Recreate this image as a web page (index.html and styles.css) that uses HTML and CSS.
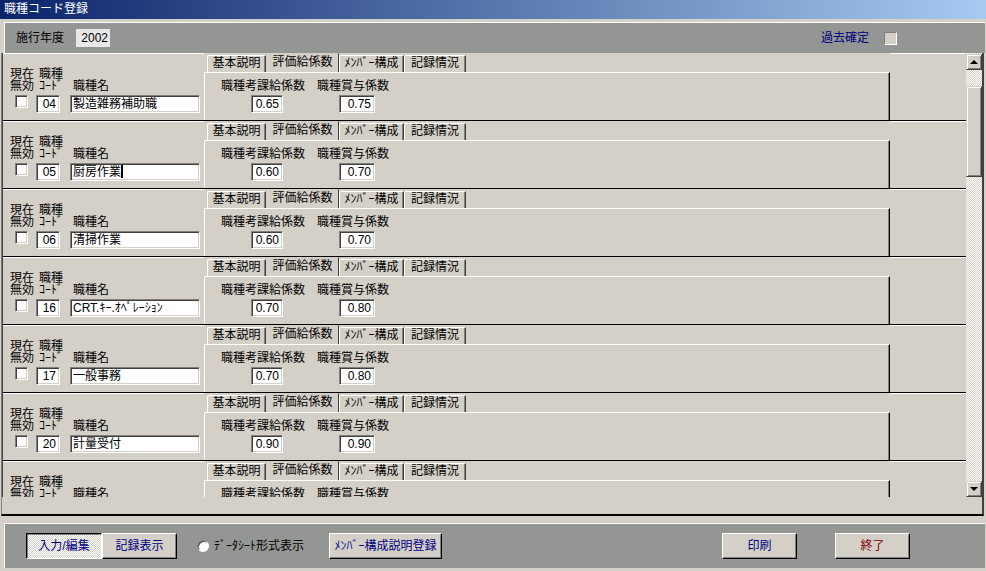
FILE: index.html
```
<!DOCTYPE html>
<html lang='ja'>
<head>
    <meta charset='UTF-8'>
    <title>職種コード登録</title>
    <link rel="stylesheet" href="styles.css">
</head>
<body>
    <div class='titlebar'>職種コード登録</div>

    <div class='header'>
        <span>施行年度</span>
        <span class='year'>2002</span>
        <span class='past'>過去確定</span>
        <span class='flatcheck'></span>
    </div>

    <div class='detail-wrap'>
        <div class='detail'>
            <div class='records'>

                <div class='rec'>
                    <div class='rec-left'>
                        <div class='col1'><div class='lbl'>現在<br>無効</div><span class='chk'></span></div>
                        <div class='col2'><div class='lbl'>職種<br>ｺｰﾄﾞ</div><span class='box code'>04</span></div>
                        <div class='col3'><div class='lbl one'>職種名</div><span class='box name'>製造雑務補助職</span></div>
                    </div>
                    <div class='rec-tabs'>
                        <div class='tabrow'>
                            <span class='tab t1'>基本説明</span><span class='tab t2 sel'>評価給係数</span><span class='tab t3'>ﾒﾝﾊﾞｰ構成</span><span class='tab t4'>記録情況</span>
                        </div>
                        <div class='page'>
                            <div class='pcol a'><div class='lbl'>職種考課給係数</div><span class='box num'>0.65</span></div>
                            <div class='pcol b'><div class='lbl'>職種賞与係数</div><span class='box num'>0.75</span></div>
                        </div>
                    </div>
                    <div class='rec-blank'></div>
                </div>

                <div class='rec'>
                    <div class='rec-left'>
                        <div class='col1'><div class='lbl'>現在<br>無効</div><span class='chk'></span></div>
                        <div class='col2'><div class='lbl'>職種<br>ｺｰﾄﾞ</div><span class='box code'>05</span></div>
                        <div class='col3'><div class='lbl one'>職種名</div><span class='box name'>厨房作業<i class='caret'></i></span></div>
                    </div>
                    <div class='rec-tabs'>
                        <div class='tabrow'>
                            <span class='tab t1'>基本説明</span><span class='tab t2 sel'>評価給係数</span><span class='tab t3'>ﾒﾝﾊﾞｰ構成</span><span class='tab t4'>記録情況</span>
                        </div>
                        <div class='page'>
                            <div class='pcol a'><div class='lbl'>職種考課給係数</div><span class='box num'>0.60</span></div>
                            <div class='pcol b'><div class='lbl'>職種賞与係数</div><span class='box num'>0.70</span></div>
                        </div>
                    </div>
                    <div class='rec-blank'></div>
                </div>

                <div class='rec'>
                    <div class='rec-left'>
                        <div class='col1'><div class='lbl'>現在<br>無効</div><span class='chk'></span></div>
                        <div class='col2'><div class='lbl'>職種<br>ｺｰﾄﾞ</div><span class='box code'>06</span></div>
                        <div class='col3'><div class='lbl one'>職種名</div><span class='box name'>清掃作業</span></div>
                    </div>
                    <div class='rec-tabs'>
                        <div class='tabrow'>
                            <span class='tab t1'>基本説明</span><span class='tab t2 sel'>評価給係数</span><span class='tab t3'>ﾒﾝﾊﾞｰ構成</span><span class='tab t4'>記録情況</span>
                        </div>
                        <div class='page'>
                            <div class='pcol a'><div class='lbl'>職種考課給係数</div><span class='box num'>0.60</span></div>
                            <div class='pcol b'><div class='lbl'>職種賞与係数</div><span class='box num'>0.70</span></div>
                        </div>
                    </div>
                    <div class='rec-blank'></div>
                </div>

                <div class='rec'>
                    <div class='rec-left'>
                        <div class='col1'><div class='lbl'>現在<br>無効</div><span class='chk'></span></div>
                        <div class='col2'><div class='lbl'>職種<br>ｺｰﾄﾞ</div><span class='box code'>16</span></div>
                        <div class='col3'><div class='lbl one'>職種名</div><span class='box name'>CRT.ｷｰ.ｵﾍﾟﾚｰｼｮﾝ</span></div>
                    </div>
                    <div class='rec-tabs'>
                        <div class='tabrow'>
                            <span class='tab t1'>基本説明</span><span class='tab t2 sel'>評価給係数</span><span class='tab t3'>ﾒﾝﾊﾞｰ構成</span><span class='tab t4'>記録情況</span>
                        </div>
                        <div class='page'>
                            <div class='pcol a'><div class='lbl'>職種考課給係数</div><span class='box num'>0.70</span></div>
                            <div class='pcol b'><div class='lbl'>職種賞与係数</div><span class='box num'>0.80</span></div>
                        </div>
                    </div>
                    <div class='rec-blank'></div>
                </div>

                <div class='rec'>
                    <div class='rec-left'>
                        <div class='col1'><div class='lbl'>現在<br>無効</div><span class='chk'></span></div>
                        <div class='col2'><div class='lbl'>職種<br>ｺｰﾄﾞ</div><span class='box code'>17</span></div>
                        <div class='col3'><div class='lbl one'>職種名</div><span class='box name'>一般事務</span></div>
                    </div>
                    <div class='rec-tabs'>
                        <div class='tabrow'>
                            <span class='tab t1'>基本説明</span><span class='tab t2 sel'>評価給係数</span><span class='tab t3'>ﾒﾝﾊﾞｰ構成</span><span class='tab t4'>記録情況</span>
                        </div>
                        <div class='page'>
                            <div class='pcol a'><div class='lbl'>職種考課給係数</div><span class='box num'>0.70</span></div>
                            <div class='pcol b'><div class='lbl'>職種賞与係数</div><span class='box num'>0.80</span></div>
                        </div>
                    </div>
                    <div class='rec-blank'></div>
                </div>

                <div class='rec'>
                    <div class='rec-left'>
                        <div class='col1'><div class='lbl'>現在<br>無効</div><span class='chk'></span></div>
                        <div class='col2'><div class='lbl'>職種<br>ｺｰﾄﾞ</div><span class='box code'>20</span></div>
                        <div class='col3'><div class='lbl one'>職種名</div><span class='box name'>計量受付</span></div>
                    </div>
                    <div class='rec-tabs'>
                        <div class='tabrow'>
                            <span class='tab t1'>基本説明</span><span class='tab t2 sel'>評価給係数</span><span class='tab t3'>ﾒﾝﾊﾞｰ構成</span><span class='tab t4'>記録情況</span>
                        </div>
                        <div class='page'>
                            <div class='pcol a'><div class='lbl'>職種考課給係数</div><span class='box num'>0.90</span></div>
                            <div class='pcol b'><div class='lbl'>職種賞与係数</div><span class='box num'>0.90</span></div>
                        </div>
                    </div>
                    <div class='rec-blank'></div>
                </div>

                <div class='rec'>
                    <div class='rec-left'>
                        <div class='col1'><div class='lbl'>現在<br>無効</div><span class='chk'></span></div>
                        <div class='col2'><div class='lbl'>職種<br>ｺｰﾄﾞ</div><span class='box code'>21</span></div>
                        <div class='col3'><div class='lbl one'>職種名</div><span class='box name'></span></div>
                    </div>
                    <div class='rec-tabs'>
                        <div class='tabrow'>
                            <span class='tab t1'>基本説明</span><span class='tab t2 sel'>評価給係数</span><span class='tab t3'>ﾒﾝﾊﾞｰ構成</span><span class='tab t4'>記録情況</span>
                        </div>
                        <div class='page'>
                            <div class='pcol a'><div class='lbl'>職種考課給係数</div><span class='box num'></span></div>
                            <div class='pcol b'><div class='lbl'>職種賞与係数</div><span class='box num'></span></div>
                        </div>
                    </div>
                    <div class='rec-blank'></div>
                </div>

            </div>
            <div class='vscroll'>
                <span class='sb-btn'><i class='up'></i></span>
                <span class='thumb'></span>
                <span class='sb-btn down-btn'><i class='down'></i></span>
            </div>
        </div>
        <div class='detail-pad'></div>
    </div>

    <div class='footer'>
        <span class='btn pressed w1'>入力/編集</span>
        <span class='btn w2'>記録表示</span>
        <span class='radio'></span>
        <span class='radio-lbl'>ﾃﾞｰﾀｼｰﾄ形式表示</span>
        <span class='btn w3'>ﾒﾝﾊﾞｰ構成説明登録</span>
        <span class='btn w4 print'>印刷</span>
        <span class='btn w4 quit'>終了</span>
    </div>
</body>
</html>
```
FILE: styles.css
```
*{
    margin: 0;
    padding: 0;
    box-sizing: border-box;
}
body{
    width: 986px;
    height: 571px;
    overflow: hidden;
    background-color: #d4d0c8;
    font-family: "Liberation Sans", "Noto Sans CJK JP", sans-serif;
    font-size: 12px;
    line-height: 14px;
    color: #000;
}
.titlebar{
    height: 19px;
    line-height: 19px;
    padding-left: 4px;
    color: #fff;
    background: linear-gradient(to right, #0a246a, #a6caf0);
}

/* header band */
.header{
    display: flex;
    align-items: center;
    height: 31px;
    margin: 3px 1px 0 4px;
    padding: 0 88px 0 11px;
    border-top: 1px solid #fff;
    border-left: 1px solid #fff;
    background-color: #949693;
}
.header .year{
    width: 34px;
    height: 18px;
    line-height: 18px;
    margin-left: 12px;
    padding-right: 2px;
    text-align: right;
    background-color: #e8e8e8;
}
.header .past{
    margin-left: auto;
    color: #000080;
}
.flatcheck{
    width: 13px;
    height: 13px;
    margin-left: 15px;
    background-color: #d4d0c8;
    border: 1px solid;
    border-color: #808080 #fff #fff #808080;
}

/* detail area */
.detail-wrap{
    margin: 0 2px 0 1px;
    border-left: 1px solid #808080;
    border-right: 2px solid #404040;
    border-bottom: 2px solid #000;
}
.detail{
    display: flex;
    height: 444px;
}
.records{
    flex: 1;
    overflow: hidden;
    border-left: 1px solid #404040;
}
.detail-pad{
    height: 17px;
}
.rec{
    display: flex;
    height: 68px;
    border-bottom: 1px solid #000;
}
.rec-left{
    display: flex;
    width: 201px;
    padding: 14px 0 0 7px;
    border-top: 1px solid #fff;
}
.lbl{
    height: 24px;
    line-height: 12px;
    white-space: nowrap;
}
.lbl.one{
    padding-top: 12px;
}
.col1{
    width: 26px;
}
.col2{
    width: 24px;
}
.col2 .lbl, .col3 .lbl{
    padding-left: 3px;
}
.col3{
    width: 130px;
    margin-left: 10px;
}
.chk{
    display: block;
    width: 13px;
    height: 13px;
    margin: 3px 0 0 5px;
    background-color: #fff;
    border: 1px solid;
    border-color: #808080 #fff #fff #808080;
    box-shadow: inset 1px 1px #404040, inset -1px -1px #d4d0c8;
}
.box{
    display: block;
    height: 18px;
    line-height: 16px;
    margin-top: 3px;
    padding: 0 2px;
    white-space: nowrap;
    overflow: hidden;
    background-color: #fff;
    border: 1px solid;
    border-color: #808080 #fff #fff #808080;
    box-shadow: inset 1px 1px #404040, inset -1px -1px #d4d0c8;
}
.box.code{
    width: 24px;
    text-align: right;
    padding-right: 3px;
}
.box.name{
    width: 130px;
    padding-left: 2px;
}
.caret{
    display: inline-block;
    width: 2px;
    height: 13px;
    vertical-align: -2px;
    background-color: #000;
}
.box.num{
    text-align: right;
    padding-right: 3px;
}

/* tab control in each record */
.rec-tabs{
    width: 686px;
    display: flex;
    flex-direction: column;
}
.tabrow{
    display: flex;
    height: 19px;
    padding-left: 3px;
}
.tab{
    height: 17px;
    margin-top: 2px;
    line-height: 15px;
    text-align: center;
    white-space: nowrap;
    border-top: 1px solid #fff;
    border-left: 1px solid #fff;
    border-right: 1px solid #404040;
    border-top-left-radius: 2px;
    box-shadow: inset -1px 0 #808080;
}
.tab.sel{
    height: 19px;
    margin-top: 0;
    line-height: 16px;
    border-top-color: #d4d0c8;
    border-left-color: #d4d0c8;
    border-right-color: #404040;
    box-shadow: none;
}
.t1{ width: 59px; }
.t2{ width: 73px; }
.t3{ width: 65px; }
.t4{ width: 62px; }
.page{
    display: flex;
    gap: 12px;
    height: 48px;
    padding: 7px 0 0 16px;
    border-top: 1px solid #fff;
    border-left: 1px solid #fff;
    border-right: 1px solid #000;
    box-shadow: inset -1px 0 #808080;
}
.page .lbl{
    height: 12px;
}
.pcol.a{
    width: 84px;
}
.pcol.a .box{
    width: 32px;
    margin-left: 30px;
}
.pcol.b{
    width: 72px;
}
.pcol.b .box{
    width: 36px;
    margin-left: 22px;
}
.rec-blank{
    flex: 1;
    border-top: 1px solid #fff;
}

/* scrollbar */
.vscroll{
    width: 16px;
    display: flex;
    flex-direction: column;
    padding-top: 1px;
    background: repeating-conic-gradient(#fff 0 25%, #d4d0c8 0 50%) 0 0 / 2px 2px;
}
.sb-btn, .thumb{
    display: flex;
    align-items: center;
    justify-content: center;
    background-color: #d4d0c8;
    border: 1px solid;
    border-color: #d4d0c8 #404040 #404040 #d4d0c8;
    box-shadow: inset 1px 1px #fff, inset -1px -1px #808080;
}
.sb-btn{
    height: 16px;
}
.thumb{
    height: 91px;
    margin-top: 16px;
}
.down-btn{
    margin-top: auto;
}
.up{
    border-left: 4px solid transparent;
    border-right: 4px solid transparent;
    border-bottom: 4px solid #000;
}
.down{
    border-left: 4px solid transparent;
    border-right: 4px solid transparent;
    border-top: 4px solid #000;
}

/* footer band */
.footer{
    display: flex;
    align-items: center;
    height: 45px;
    margin: 7px 1px 0 4px;
    padding: 0 0 0 21px;
    border-top: 1px solid #fff;
    border-left: 1px solid #fff;
    background-color: #949693;
}
.btn{
    height: 26px;
    line-height: 24px;
    text-align: center;
    white-space: nowrap;
    color: #000080;
    background-color: #d4d0c8;
    border: 1px solid;
    border-color: #fff #000 #000 #fff;
    box-shadow: inset -1px -1px #808080;
}
.btn.pressed{
    border-color: #000 #fff #fff #000;
    box-shadow: inset 1px 1px #808080;
    background: repeating-conic-gradient(#fff 0 25%, #d4d0c8 0 50%) 0 0 / 2px 2px;
}
.w1{ width: 76px; }
.w2{ width: 75px; }
.w3{ width: 113px; }
.w4{ width: 75px; }
.radio{
    width: 12px;
    height: 12px;
    margin-left: 20px;
    border-radius: 50%;
    background-color: #fff;
    border: 1px solid;
    border-color: #808080 #fff #fff #808080;
    box-shadow: inset 1px 1px #404040;
}
.radio-lbl{
    width: 120px;
    padding-left: 5px;
    white-space: nowrap;
}
.print{
    margin-left: 280px;
}
.quit{
    margin-left: 38px;
    color: #800000;
}
```
